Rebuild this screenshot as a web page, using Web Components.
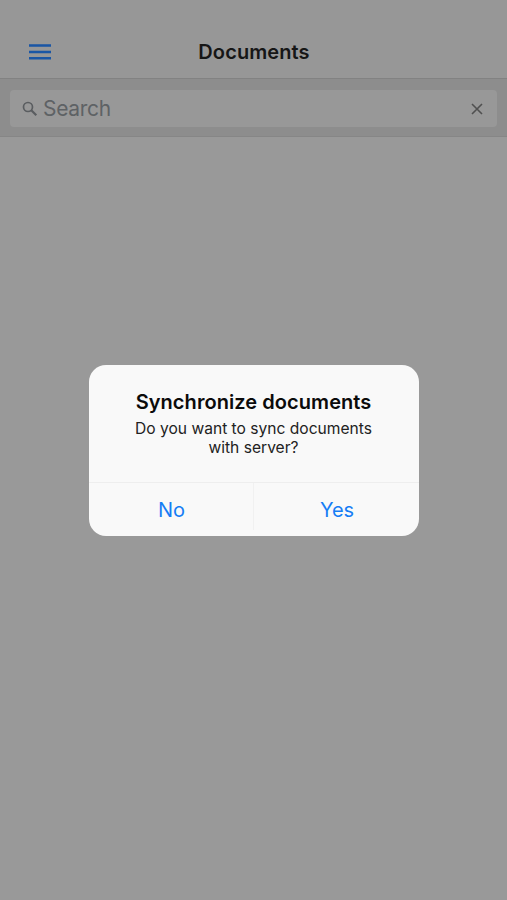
<!DOCTYPE html>
<html lang="en"><head><meta charset="utf-8"><title>Documents</title>
<style>html,body{margin:0;height:100%;overflow:hidden}body{font-family:Inter,"Liberation Sans",sans-serif;background:#999}</style></head>
<body><documents-page></documents-page>
<script>
const define=(name,html)=>customElements.define(name,class extends HTMLElement{constructor(){super();this.attachShadow({mode:"open"}).innerHTML=html;}});
define("app-bar",`<style>:host{display:grid;grid-template-columns:80px 1fr 80px;padding-top:26px;box-sizing:border-box;align-items:center;background:#979797;border-bottom:1px solid #828282;height:79px}svg{display:block;margin-left:29px}h1{margin:0;padding-left:1px;text-align:center;font-size:20px;line-height:24px;font-weight:600;letter-spacing:.1px;color:#161616}</style><svg width="22" height="16" viewBox="0 0 22 16"><path d="M0 1.5h22M0 8h22M0 14.2h22" stroke="#1a56a5" stroke-width="2.5"/></svg><h1><slot></slot></h1>`);
define("search-field",`<style>:host{display:block;background:#8d8d8d;border-bottom:1px solid #868686;padding:11px 10px 9px}div{height:37px;border-radius:4px;background:#989898;display:flex;align-items:center;padding:0 14px 0 12px}span{flex:1;font-size:21px;letter-spacing:-.3px;color:#5e6265;margin-left:5px}svg{display:block}</style><div><svg width="16" height="16" viewBox="0 0 16 16" fill="none" stroke="#5a5d60" stroke-width="1.7"><circle cx="6" cy="6" r="4.5"/><path d="M9.3 9.3l5 5" stroke-width="2.2"/></svg><span><slot></slot></span><svg width="12" height="12" viewBox="0 0 12 12"><path d="M1 1l10 10M11 1L1 11" stroke="#505050" stroke-width="1.6"/></svg></div>`);
define("alert-dialog",`<style>:host{display:flex;flex-direction:column;width:330px;height:171px;border-radius:17px;background:#f9f9f9;overflow:hidden;color:#0b0b0b;text-align:center}.copy{height:117px;box-sizing:border-box;padding-top:24px}h2{margin:0;font-size:20px;line-height:26px;font-weight:600;letter-spacing:.06px}p{margin:4px 0 0;font-size:15.6px;line-height:19.5px;color:#222}.actions{flex:1;display:grid;grid-template-columns:1fr 1fr;border-top:1px solid #eee}</style><div class="copy"><h2><slot name="title"></slot></h2><p><slot></slot></p></div><div class="actions"><slot name="action"></slot></div>`);
define("dialog-button",`<style>:host{display:grid;place-items:center;padding:2px 0 0 1px;font-size:20px;letter-spacing:-.1px;color:#167df5}:host([divided]){border-left:1px solid #f1f1f1;margin-left:-1px;margin-bottom:6px;padding:8px 0 0 2px}</style><span><slot></slot></span>`);
define("documents-page",`<style>:host{display:flex;flex-direction:column;height:100vh;position:relative}.overlay{position:absolute;inset:0;display:grid;place-items:center}</style><app-bar>Documents</app-bar><search-field>Search</search-field><div class="overlay"><alert-dialog><span slot="title">Synchronize documents</span>Do you want to sync documents<br>with server?<dialog-button slot="action">No</dialog-button><dialog-button slot="action" divided>Yes</dialog-button></alert-dialog></div>`);
</script></body></html>
